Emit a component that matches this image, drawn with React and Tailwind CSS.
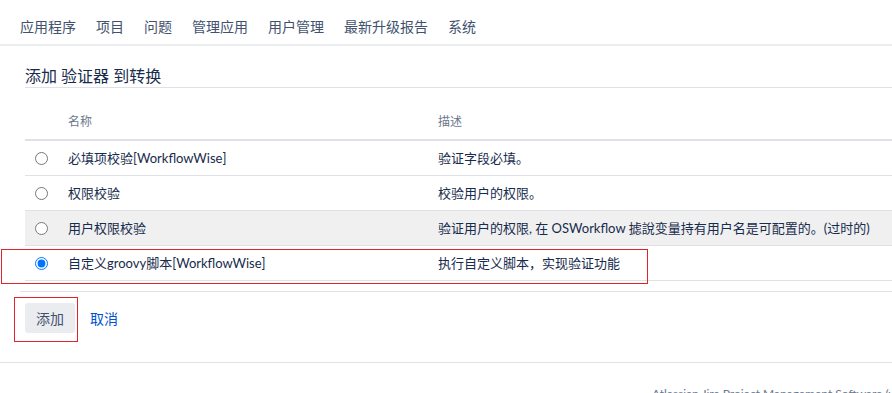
import React from 'react'

const navItems = ['应用程序', '项目', '问题', '管理应用', '用户管理', '最新升级报告', '系统']

const validators = [
	{ name: '必填项校验[WorkflowWise]', desc: '验证字段必填。' },
	{ name: '权限校验', desc: '校验用户的权限。' },
	{
		name: '用户权限校验',
		desc: '验证用户的权限, 在 OSWorkflow 摅說变量持有用户名是可配置的。(过时的)',
		hover: true,
	},
	{ name: '自定义groovy脚本[WorkflowWise]', desc: '执行自定义脚本，实现验证功能', checked: true },
]

const App = () => {
	return (
		<div className="relative w-[892px] h-[393px] overflow-hidden bg-white text-[#172b4d] font-['Lato','Noto_Sans_CJK_SC',sans-serif]">
			{/* top nav */}
			<nav className="flex gap-[20px] pl-[20px] pt-[17px] pb-[7px] border-b-2 border-[#ebecf0] text-[14px] leading-[20px] text-[#42526e]">
				{navItems.map((item) => (
					<span key={item}>{item}</span>
				))}
			</nav>

			<div className="pl-[20px]">
				<h2 className="ml-[5px] mt-[20px] text-[16px] leading-[20px] font-normal border-b border-[#dfe1e6] pb-[1px]">
					添加 验证器 到转换
				</h2>

				<table className="ml-[5px] mt-[17px] w-[867px] table-fixed border-collapse text-[13px] leading-[20px]">
					<colgroup>
						<col className="w-[33px]" />
						<col className="w-[370px]" />
						<col />
					</colgroup>
					<thead>
						<tr className="border-b-2 border-[#dfe1e6] text-[12px] text-[#6b778c]">
							<th className="py-[7px]" />
							<th className="py-[7px] px-[10px] text-left font-normal">名称</th>
							<th className="py-[7px] px-[10px] text-left font-normal">描述</th>
						</tr>
					</thead>
					<tbody>
						{validators.map((v) => (
							<tr
								key={v.name}
								className={`border-b border-[#dfe1e6] ${v.hover ? 'bg-[#f0f0f0]' : ''}`}
							>
								<td className="py-[7px] pl-[10px] align-middle">
									<input
										type="radio"
										name="validator"
										defaultChecked={v.checked}
										className="block w-[13px] h-[13px] m-0"
									/>
								</td>
								<td className="py-[7px] px-[10px] whitespace-nowrap">{v.name}</td>
								<td className="py-[7px] px-[10px] whitespace-nowrap">{v.desc}</td>
							</tr>
						))}
					</tbody>
				</table>

				<div className="mt-[10px] border-t border-[#dfe1e6] pt-[11px] pb-[29px] flex items-center gap-[15px] pl-[5px]">
					<button className="h-[30px] w-[50px] rounded-[3px] bg-[#ebecf0] text-[14px] text-[#42526e]">
						添加
					</button>
					<a href="#" className="text-[14px] text-[#0052cc]">
						取消
					</a>
				</div>
			</div>

			<footer className="border-t border-[#dfe1e6] pt-[23px] pl-[652px] whitespace-nowrap text-[12px] leading-[16px] text-[#6b778c]">
				Atlassian Jira Project Management Software (v8.13.5#813005)
			</footer>

			{/* red annotation boxes */}
			<div className="absolute left-[1px] top-[249px] w-[647px] h-[35px] border border-[#e0242b] pointer-events-none" />
			<div className="absolute left-[14px] top-[297px] w-[64px] h-[45px] border border-[#e0242b] pointer-events-none" />
		</div>
	)
}

export default App
